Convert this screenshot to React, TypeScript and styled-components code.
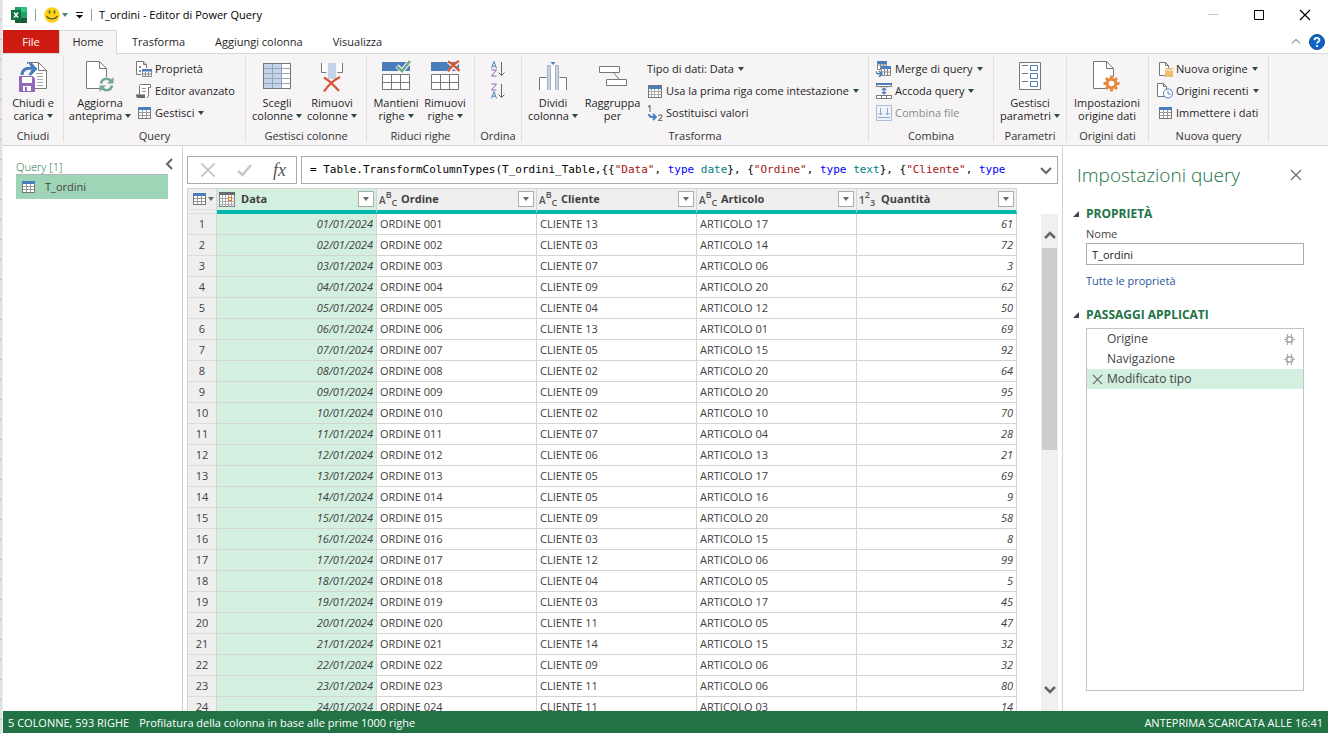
import React from "react";
import styled, { createGlobalStyle, css } from "styled-components";

const GlobalStyle = createGlobalStyle`
  *, *::before, *::after { box-sizing: border-box; }
  html, body { margin: 0; padding: 0; }
  body {
    font-family: "Open Sans", "Noto Sans", sans-serif;
    font-size: 11px;
    line-height: 14px;
    color: #262626;
    background: #fff;
  }
  button, input { font: inherit; color: inherit; }
  button { margin: 0; padding: 0; border: 0; background: none; }
  svg { display: block; flex: none; }
`;

/* ---------- frame ---------- */

const Desktop = styled.div`
  display: flex;
  height: 100vh;
  min-height: 480px;
  overflow: hidden;
`;

const SheetEdge = styled.div`
  flex: none;
  width: 3px;
  border-right: 1px solid #f0f0f0;
  background: repeating-linear-gradient(to bottom, #e2e2e2 0, #e2e2e2 19px, #bdbdbd 19px, #bdbdbd 20px);
`;

const AppWindow = styled.div`
  display: flex;
  flex: 1;
  flex-direction: column;
  min-width: 0;
  padding-bottom: 1px;
`;

/* ---------- title bar ---------- */

const TitleBar = styled.header`
  display: flex;
  flex: none;
  align-items: center;
  height: 30px;
  padding-left: 8px;
`;

const QuickAccess = styled.div`
  display: flex;
  align-items: center;
  gap: 8px;
  margin-right: 7px;
`;

const Rule = styled.span`
  width: 1px;
  height: 12px;
  background: #8aa09a;
`;

const QuickButton = styled.button`
  display: flex;
  align-items: center;
  gap: 2px;
`;

const WindowTitle = styled.h1`
  flex: 1;
  margin: 0;
  font-size: 11px;
  font-weight: 400;
  line-height: 16px;
  color: #000;
`;

const WindowButton = styled.button`
  display: flex;
  align-items: center;
  justify-content: center;
  width: 46px;
  height: 28px;
`;

/* ---------- ribbon ---------- */

const TabRow = styled.nav`
  display: flex;
  flex: none;
  align-items: stretch;
  height: 24px;
  border-bottom: 1px solid #d9d7d8;
`;

const Tab = styled.button<{ $kind?: "file" | "active" }>`
  padding: 0 15px;
  height: 23px;
  color: #262626;
  ${(p) =>
    p.$kind === "file" &&
    css`
      width: 56px;
      color: #fff;
      background: #d01b12;
    `}
  ${(p) =>
    p.$kind === "active" &&
    css`
      width: 58px;
      height: 24px;
      padding: 0 0 2px;
      background: #f6f4f5;
      border: 1px solid #d9d7d8;
      border-bottom: 0;
    `}
`;

const TabTools = styled.div`
  display: flex;
  align-items: center;
  gap: 8px;
  margin-left: auto;
  padding-right: 3px;
`;

const RibbonBar = styled.div`
  display: flex;
  flex: none;
  height: 92px;
  padding: 2px 0 3px;
  background: #f6f4f5;
  border-bottom: 1px solid #d4d2d3;
`;

const GroupBox = styled.section<{ $width: number }>`
  display: flex;
  flex: none;
  flex-direction: column;
  width: ${(p) => p.$width}px;
  border-right: 1px solid #e1dfe0;
`;

const GroupBody = styled.div<{ $pad: number }>`
  display: flex;
  flex: 1;
  align-items: flex-start;
  padding: 4px 0 0 ${(p) => p.$pad}px;
`;

const GroupLabel = styled.h2`
  margin: 0;
  font-size: 11px;
  font-weight: 400;
  line-height: 13px;
  text-align: center;
  color: #333;
`;

const BigButtonBox = styled.button<{ $width: number }>`
  display: flex;
  flex: none;
  flex-direction: column;
  align-items: center;
  width: ${(p) => p.$width}px;
  line-height: 13px;
  white-space: nowrap;
  color: #1f1f1f;
`;

const BigLine = styled.span`
  display: flex;
  align-items: center;
  gap: 3px;
  &:nth-of-type(1) { margin-top: 4px; }
`;

const Stack = styled.div`
  display: flex;
  flex-direction: column;
  margin-top: -2px;
  padding-left: 2px;
`;

const SmallButton = styled.button`
  display: flex;
  align-items: center;
  gap: 4px;
  height: 22px;
  white-space: nowrap;
  color: #1f1f1f;
  &:disabled { color: #8b8b8b; }
`;

const IconSlot = styled.span`
  display: flex;
  justify-content: center;
  width: 16px;
  margin-right: -1px;
`;

/* ---------- work area ---------- */

const WorkArea = styled.div`
  display: flex;
  flex: 1;
  min-height: 0;
`;

const QueryPane = styled.aside`
  flex: none;
  width: 180px;
  padding: 12px 14px 0 13px;
  border-right: 1px solid #d0d0d0;
`;

const QueryHead = styled.div`
  display: flex;
  align-items: flex-start;
  justify-content: space-between;
  height: 16px;
  margin-right: -7px;
`;

const QueryTitle = styled.h2`
  margin: 0;
  padding-top: 1px;
  font-size: 11px;
  font-weight: 300;
  line-height: 16px;
  color: #217346;
`;

const QueryItem = styled.button`
  display: flex;
  align-items: center;
  gap: 10px;
  width: 100%;
  height: 25px;
  padding-left: 6px;
  border-top: 1px solid #b3b3b3;
  background: #9fd5b7;
  color: #444;
`;

const Center = styled.main`
  display: flex;
  flex: 1;
  flex-direction: column;
  min-width: 0;
  padding: 10px 4px 0;
`;

const FormulaRow = styled.div`
  display: flex;
  flex: none;
  gap: 4px;
  height: 28px;
`;

const FormulaTools = styled.div`
  display: flex;
  flex: none;
  align-items: center;
  justify-content: space-between;
  width: 110px;
  padding: 0 10px 0 12px;
  border: 1px solid #ababab;
`;

const FxButton = styled.button`
  font-family: "Liberation Serif", serif;
  font-size: 18px;
  font-style: italic;
  line-height: 20px;
  color: #555;
`;

const FormulaBox = styled.div`
  display: flex;
  flex: 1;
  align-items: center;
  justify-content: space-between;
  min-width: 0;
  padding: 0 5px 0 8px;
  border: 1px solid #ababab;
`;

const Formula = styled.code`
  overflow: hidden;
  font-family: "DejaVu Sans Mono", "Liberation Mono", monospace;
  font-size: 11px;
  white-space: pre;
  color: #000;
`;

const Str = styled.span`
  color: #a31515;
`;
const Kw = styled.span`
  color: #0000ff;
`;
const Ty = styled.span`
  color: #008080;
`;

const GridArea = styled.div`
  display: flex;
  flex: 1;
  justify-content: space-between;
  min-height: 0;
  margin-top: 4px;
  overflow: hidden;
`;

const DataTable = styled.table`
  flex: none;
  align-self: flex-start;
  width: 830px;
  table-layout: fixed;
  border-collapse: separate;
  border-spacing: 0;
  border-left: 1px solid #d4d4d4;
  color: #404040;
`;

const HeadCell = styled.th<{ $active?: boolean; $plain?: boolean }>`
  height: 26px;
  padding: 0;
  border-top: 1px solid #d4d4d4;
  border-right: 1px solid #d4d4d4;
  border-bottom: ${(p) => (p.$plain ? "1px solid #e0e0e0" : "4px solid #01b8aa")};
  background: ${(p) => (p.$active ? "#d2efdf" : "#efefef")};
  font-weight: 700;
  text-align: left;
`;

const HeadInner = styled.div`
  display: flex;
  align-items: center;
  gap: 6px;
  height: 21px;
  padding: 0 2px 1px;
`;

const CornerInner = styled(HeadInner)`
  gap: 2px;
  margin-bottom: 3px;
  padding: 0 0 0 5px;
  border-bottom: 1px solid #e0e0e0;
`;

const FilterButton = styled.button`
  display: flex;
  align-items: center;
  justify-content: center;
  width: 16px;
  height: 16px;
  margin-left: auto;
  border: 1px solid #ababab;
  background: #fff;
`;

const RowHead = styled.th`
  height: 21px;
  padding: 0;
  border-right: 1px solid #d4d4d4;
  border-bottom: 1px solid #dcdcdc;
  background: #efefef;
  font-weight: 400;
  text-align: center;
`;

const Cell = styled.td<{ $active?: boolean; $numeric?: boolean }>`
  height: 21px;
  padding: 0 3px;
  border-right: 1px solid #d4d4d4;
  border-bottom: 1px solid #d4d4d4;
  white-space: nowrap;
  ${(p) =>
    p.$numeric &&
    css`
      text-align: right;
      font-style: italic;
    `}
  ${(p) =>
    p.$active &&
    css`
      background: #d2efdf;
    `}
`;

const ScrollTrack = styled.div`
  display: flex;
  flex: none;
  flex-direction: column;
  width: 17px;
  margin-top: 26px;
  background: #f0f0f0;
`;

const ScrollButton = styled.button`
  display: flex;
  flex: none;
  align-items: center;
  justify-content: center;
  height: 34px;
  padding-top: 10px;
`;

const ScrollThumb = styled.div`
  flex: 0 0 202px;
  margin: 0 1px;
  background: #cdcdcd;
`;

const ScrollDown = styled(ScrollButton)`
  margin-top: auto;
  padding: 0 0 10px;
`;

/* ---------- settings pane ---------- */

const SettingsPane = styled.aside`
  display: flex;
  flex: none;
  flex-direction: column;
  width: 266px;
  padding: 15px 24px 20px 23px;
  border-left: 1px solid #d0d0d0;
`;

const PaneHead = styled.div`
  display: flex;
  align-items: center;
  justify-content: space-between;
  height: 28px;
  margin-left: -9px;
  padding-right: 2px;
`;

const PaneTitle = styled.h2`
  margin: 0;
  font-size: 19px;
  font-weight: 300;
  line-height: 28px;
  color: #217346;
`;

const SectionTitle = styled.h3`
  display: flex;
  align-items: center;
  gap: 7px;
  margin: 0 0 0 -13px;
  font-size: 12px;
  font-weight: 700;
  line-height: 16px;
  color: #217346;
`;

const Properties = styled.section`
  padding-top: 17px;
  color: #444;
`;

const NameLabel = styled.label`
  display: block;
  margin-top: 4px;
  line-height: 16px;
`;

const NameInput = styled.input`
  width: 100%;
  height: 22px;
  margin: 1px 0 0;
  padding: 0 5px;
  border: 1px solid #ababab;
  outline: 0;
  background: #fff;
  color: #222;
`;

const MoreLink = styled.a`
  display: block;
  margin-top: 8px;
  line-height: 16px;
  color: #2b579a;
  text-decoration: none;
`;

const Steps = styled.section`
  display: flex;
  flex: 1;
  flex-direction: column;
  padding-top: 18px;
`;

const StepList = styled.ul`
  flex: 1;
  margin: 5px 0 0;
  padding: 0;
  border: 1px solid #c3c3c3;
  list-style: none;
`;

const StepItem = styled.li<{ $selected?: boolean }>`
  display: flex;
  align-items: center;
  gap: 4px;
  height: 20px;
  padding: 0 8px 0 5px;
  font-size: 12px;
  color: #444;
  background: ${(p) => (p.$selected ? "#d2efdf" : "transparent")};
`;

const StepMark = styled.span`
  display: flex;
  width: 11px;
`;

const StepName = styled.span`
  flex: 1;
`;

/* ---------- status bar ---------- */

const StatusBar = styled.footer`
  display: flex;
  flex: none;
  align-items: center;
  gap: 10px;
  height: 22px;
  padding: 2px 5px 0;
  background: #217346;
  color: #fff;
`;

const StatusRight = styled.span`
  margin-left: auto;
`;

/* ---------- icons ---------- */

const G = "#777777";
const B = "#4a7ebb";

const Caret = ({ color = "#2d4a42" }: { color?: string }) => (
  <svg width="6" height="4" viewBox="0 0 6 4">
    <path d="M0 0h6L3 4z" fill={color} />
  </svg>
);

const ExcelIcon = () => (
  <svg width="16" height="16" viewBox="0 0 16 16">
    <path d="M4 0h6v5H4z" fill="#21a366" />
    <path d="M10 0h6v5h-6z" fill="#33c481" />
    <path d="M4 5h6v6H4z" fill="#107c41" />
    <path d="M10 5h6v6h-6z" fill="#21a366" />
    <path d="M4 11h12v5H4z" fill="#185c37" />
    <path d="M0 3h10v10H0z" fill="#0f7240" />
    <path d="M3 5.500l4 5M7 5.500l-4 5" stroke="#fff" strokeWidth="1.500" />
  </svg>
);

const SmileIcon = () => (
  <svg width="16" height="16" viewBox="0 0 16 16">
    <circle cx="8" cy="8" r="7.800" fill="#fcd116" />
    <path d="M5.500 3.500v3M10.500 3.500v3" stroke="#4b5b3c" strokeWidth="1.600" />
    <path d="M3 9c1.200 3.800 8.800 3.800 10 0" fill="none" stroke="#5a5a3c" strokeWidth="1.300" />
  </svg>
);

const CloseLoadIcon = () => (
  <svg width="28" height="32" viewBox="0 0 28 32" fill="none">
    <path d="M8.500 4V2.500h11l8 8v18H16" fill="#fff" stroke={G} />
    <path d="M19.500 2.500v8h8" stroke={G} />
    <path d="M17 13.500h7M18 16.500h6M18 19.500h6M18 22.500h6M18 25.500h6" stroke="#a6a6a6" />
    <path d="M3 15C3 10 7 7.500 13 8.500" stroke={B} strokeWidth="3" />
    <path d="M10 3l2-.5L18 9l-6 6-2-.5L13.500 9z" fill={B} stroke={B} />
    <path d="M0 16h13.500l2.500 2.500V32H0z" fill="#9467bd" />
    <path d="M3 17h10v6H3zM4 26h8v5H4z" fill="#fff" />
    <path d="M6 27h2v4H6z" fill="#9467bd" />
  </svg>
);

const PageOutline = () => (
  <>
    <path d="M.5 1.500h13l7 7v20H.5z" fill="#fff" stroke={G} />
    <path d="M13.500 1.500v7h7" stroke={G} />
  </>
);

const RefreshIcon = () => (
  <svg width="28" height="32" viewBox="0 0 28 32" fill="none">
    <PageOutline />
    <circle cx="20.500" cy="24.500" r="7.500" fill="#f6f4f5" />
    <path d="M15 23.500c.5-4 5.500-6.500 9.500-3M26 25.500c-.5 4-5.500 6.500-9.500 3" stroke="#74a892" strokeWidth="2.400" />
    <path d="M27.500 17v6.500H21zM13.500 32v-6.500H20z" fill="#74a892" />
  </svg>
);

const ChooseColsIcon = () => (
  <svg width="28" height="32" viewBox="0 0 28 32" fill="none" shapeRendering="crispEdges">
    <path d="M.5 3.500h27v25H.5z" fill="#fff" />
    <path d="M1 4h18v24H1z" fill="#c1d4ea" />
    <path d="M9.500 4v25M18.500 4v25M1 8.500h26M1 13.500h26M1 18.500h26M1 23.500h26" stroke="#9aa5b1" />
    <path d="M.5 3.500h27v25H.5z" stroke={G} />
  </svg>
);

const RemoveColsIcon = () => (
  <svg width="24" height="32" viewBox="0 0 24 32" fill="none">
    <path d="M1.500 3v9.500h5V3M17.500 3v9.500h5V3" fill="#fff" />
    <path d="M1.500 3v9.500h5M22.500 3v9.500h-5" stroke={G} />
    <path d="M8 3h8v16H8z" fill="#c1d4ea" />
    <path d="M4 17.500c5 3 11 9 15 13.500M20 17C14 20 8 25.500 4 31.500" stroke="#d8552f" strokeWidth="2.200" />
  </svg>
);

const RowsIcon = ({ remove }: { remove?: boolean }) => (
  <svg width="30" height="32" viewBox="0 0 30 32" fill="none">
    <path d="M1 2h28v9H1z" fill={B} />
    <path d="M1.500 14.500h27v15h-27z" fill="#fff" stroke={G} />
    <path d="M10.500 15v15M19.500 15v15M2 22.500h27" stroke={G} />
    {remove ? (
      <>
        <path d="M18 1.500l11 10M29.500 1L18 12" stroke="#f6f4f5" strokeWidth="3.500" />
        <path d="M18 1.500c4 2 8 6 11.500 9.500M29 1c-4 2-8 6-11 10.500" stroke="#d8552f" strokeWidth="2.200" />
      </>
    ) : (
      <>
        <path d="M16 6l5 5L30 0" stroke="#fff" strokeWidth="4.500" />
        <path d="M16 6.500l5 4.500L29 1" stroke="#74a892" strokeWidth="2.800" />
      </>
    )}
  </svg>
);

const SortIcon = ({ desc }: { desc?: boolean }) => (
  <svg width="16" height="17" viewBox="0 0 16 17" fill="none">
    <path d="M-2.500 3.500L0-3.500 2.500 3.500M-1.500 1.200h3" stroke={B} transform={`translate(4 ${desc ? 12 : 4})`} />
    <path d="M-2.500-3h5l-5 6h5" stroke="#8e62b8" transform={`translate(4 ${desc ? 4 : 12})`} />
    <path d="M11.500 1v13M8.500 11.500l3 3 3-3" stroke="#666" />
  </svg>
);

const SplitIcon = () => (
  <svg width="28" height="32" viewBox="0 0 28 32" fill="none">
    <path d="M.5 30V17.500h7V30M27.500 30V17.500h-7V30" fill="#fff" />
    <path d="M.5 30V17.500h7M27.500 30V17.500h-7" stroke={G} />
    <path d="M8 6h4v24H8zM16 6h4v24h-4z" fill="#c1d4ea" />
    <path d="M12 6h4v24h-4z" fill="#fff" />
    <path d="M8.500 30V5.500h3V30M16.500 30V5.500h3V30" stroke="#a9b3bd" />
    <path d="M11.500 2h5L14 5z" fill={B} />
  </svg>
);

const GroupByIcon = () => (
  <svg width="28" height="32" viewBox="0 0 28 32" fill="none">
    <path d="M14 12l6 7" stroke={G} />
    <path d="M.5 6.500h20v6H.5zM7.500 19.500h20v6h-20z" fill="#fff" stroke={G} />
  </svg>
);

const ParamsIcon = () => (
  <svg width="24" height="32" viewBox="0 0 24 32" fill="none">
    <path d="M1.500 2.500h21v27h-21z" fill="#fff" stroke={G} />
    <path d="M4 5.500h6M4 13.500h6M4 21.500h6" stroke={G} />
    <path d="M12.500 5.500h7v5h-7zM12.500 13.500h7v5h-7zM12.500 21.500h7v5h-7z" stroke={B} />
  </svg>
);

const SourceSettingsIcon = () => (
  <svg width="28" height="32" viewBox="0 0 28 32" fill="none">
    <PageOutline />
    <circle cx="18.500" cy="23.500" r="7" fill="#f6f4f5" />
    <circle cx="18.500" cy="23.500" r="4.300" fill="#fff" stroke="#e58a3c" strokeWidth="3" />
    <path
      d="M18.500 15.500v3M18.500 28.500v3M10.500 23.500h3M23.500 23.500h3M13 18l2 2M22 27l2 2M24 18l-2 2M15 27l-2 2"
      stroke="#e58a3c"
      strokeWidth="3"
    />
  </svg>
);

const TableIcon = () => (
  <svg width="13" height="12" viewBox="0 0 13 12" fill="none" shapeRendering="crispEdges">
    <path d="M0 0h13v12H0z" fill="#fff" />
    <path d="M4.500 3v9M8.500 3v9M0 5.500h13M0 8.500h13" stroke="#999" />
    <path d="M.5 3v8.500h12V3" stroke="#777" />
    <path d="M0 0h13v3H0z" fill={B} />
  </svg>
);

const PropertiesIcon = () => (
  <svg width="16" height="16" viewBox="0 0 16 16" fill="none">
    <path d="M.5 13.500V.5h7l3 3V7M.5 13.500H5" fill="#fff" stroke={G} />
    <path d="M7.500.5v3h3" stroke={G} />
    <path d="M3 5h2v2H3zM3 9h2v2H3z" fill="#888" />
    <path d="M6 8h10v8H6z" fill="#fff" />
    <path d="M6.500 10v5.500h9V10M9.500 11v4M12.500 11v4M6 13h10" stroke="#888" />
    <path d="M6 8h10v2.500H6z" fill={B} />
  </svg>
);

const ScriptIcon = () => (
  <svg width="16" height="14" viewBox="0 0 16 14" fill="none">
    <path d="M3.500 11V1.500c0-1 1-1 1.500-1h9.500v3h-2V11c0 2-1 2.500-2 2.500" fill="#fff" stroke={G} />
    <path d="M6 4.500h4M6 7.500h4" stroke="#999" />
    <path d="M0 10.500h9V14H2c-1.500 0-2-2-2-3.500z" fill="#666" />
  </svg>
);

const HeaderRowIcon = () => (
  <svg width="14" height="13" viewBox="0 0 14 13" fill="none" shapeRendering="crispEdges">
    <path d="M.5.500h13v12H.5z" fill="#fff" />
    <path d="M1 1h12v3H1z" fill={B} />
    <path d="M3.500 4v9M6.500 4v9M10.500 4v9M1 6.500h12M1 9.500h12" stroke="#aaa" />
    <path d="M.5.500h13v12H.5z" stroke={G} />
  </svg>
);

const ReplaceIcon = () => (
  <svg width="16" height="16" viewBox="0 0 16 16" fill="none">
    <path d="M1 2l2-1.500V7M11.500 11c.5-1.800 3.500-1.500 3.500.2 0 1.300-2 2.300-3.500 4.300H15.500" stroke="#777" strokeWidth="1.200" />
    <path d="M2 9c0 2 1 3 3 3h3M6 9l3 3-3 3" stroke={B} strokeWidth="1.800" />
  </svg>
);

const MergeIcon = () => (
  <svg width="16" height="16" viewBox="0 0 16 16" fill="none">
    <path d="M1.500.5h9v8h-9zM1 4h10M4.500 2v7M7.500 2v7" fill="#fff" stroke="#888" />
    <path d="M1 0h10v3H1z" fill={B} />
    <path d="M5.500 6.500h9v8h-9zM5 11h10M8.500 8v7M11.500 8v7" fill="#fff" stroke="#888" />
    <path d="M5 5h10v3H5z" fill={B} />
    <path d="M0 10c0 2.500 1 3 5 3M3 10l3 3-3 3" stroke={B} strokeWidth="1.500" />
  </svg>
);

const AppendIcon = () => (
  <svg width="16" height="16" viewBox="0 0 16 16" fill="none">
    <path d="M.5.500h15v3H.5zM.5 12.500h15v3H.5zM5.500 12v3M10.500 12v3M5.500 3v1.500M10.500 3v1.500" fill="#fff" stroke="#777" />
    <path d="M0 0h16v2H0z" fill={B} />
    <path d="M8 5v6M6 7l2-2 2 2M6 9l2 2 2-2" stroke={B} strokeWidth="1.200" />
  </svg>
);

const CombineIcon = () => (
  <svg width="16" height="16" viewBox="0 0 16 16" fill="none">
    <path d="M.5.500h15v15H.5z" fill="#f0f4fa" stroke="#a9bbd6" />
    <path d="M4.500 3v7M2.500 8l2 2 2-2M11.500 3v7M9.500 8l2 2 2-2M2 12.500h12" stroke="#8ea6c8" />
  </svg>
);

const NewSourceIcon = () => (
  <svg width="15" height="15" viewBox="0 0 15 15" fill="none">
    <path d="M1.500.500h6l3 3v10h-9z" fill="#fff" stroke={G} />
    <path d="M7.500.500v3h3" stroke={G} />
    <path d="M7 6h8v9H7z" fill="#eebf72" />
    <path d="M7 7.500c2 1 6 1 8 0" stroke="#fff" strokeWidth=".8" />
  </svg>
);

const RecentIcon = () => (
  <svg width="16" height="16" viewBox="0 0 16 16" fill="none">
    <path d="M.5.500h6l3 3v10h-9z" fill="#fff" stroke={G} />
    <path d="M6.500.500v3h3" stroke={G} />
    <circle cx="11" cy="10.500" r="4.500" fill="#fff" stroke={B} />
    <path d="M11 8v3h2.500" stroke={B} />
  </svg>
);

const CalendarIcon = () => (
  <svg width="16" height="15" viewBox="0 0 16 15" fill="none" shapeRendering="crispEdges">
    <path d="M.5.500h15v14H.5z" fill="#fff" stroke="#777" />
    <path d="M3.500 3v12M6.500 3v12M9.500 3v12M12.500 3v12M0 6.500h16M0 9.500h16M0 12.500h16" stroke="#aaa" />
    <path d="M0 0h16v3H0z" fill="#6b6b6b" />
    <path d="M9.500 5.500h3v3h-3z" fill="#fff" stroke="#e07a1f" />
  </svg>
);

const TypeGlyph = styled.span`
  display: flex;
  align-items: flex-start;
  width: 16px;
  height: 18px;
  font-size: 10px;
  font-weight: 600;
  line-height: 12px;
  color: #555;
`;

const Middle = styled.span`
  padding-top: 4px;
`;

const Raised = styled.span`
  font-size: 9px;
  line-height: 10px;
`;

const Lowered = styled.span`
  padding-top: 7px;
  font-size: 9px;
  line-height: 12px;
`;

const XMark = ({ size, color, weight = 1 }: { size: number; color: string; weight?: number }) => (
  <svg width={size} height={size} viewBox="0 0 12 12">
    <path d="M1 1l10 10M11 1L1 11" stroke={color} strokeWidth={weight} />
  </svg>
);

const Chevron = ({ dir, color = "#666", w = 10, weight = 2 }: { dir: "up" | "down" | "left"; color?: string; w?: number; weight?: number }) => {
  const d = { up: "M1 8l5-5 5 5", down: "M1 4l5 5 5-5", left: "M9 1L4 6l5 5" }[dir];
  return (
    <svg width={w} height={w} viewBox="0 0 12 12" fill="none">
      <path d={d} stroke={color} strokeWidth={weight} />
    </svg>
  );
};

const GearIcon = () => (
  <svg width="11" height="11" viewBox="0 0 11 11" fill="none">
    <circle cx="5.500" cy="5.500" r="2.700" stroke="#aaaaaa" strokeWidth="1.600" />
    <path d="M3.500 0v3M7.500 0v3M3.500 8v3M7.500 8v3M0 5.500h2.500M8.500 5.500H11M1.500 3.500H4M7 3.500h2.500M1.500 7.500H4M7 7.500h2.500" stroke="#aaaaaa" strokeWidth="1.200" />
  </svg>
);

const Triangle = () => (
  <svg width="6" height="6" viewBox="0 0 6 6">
    <path d="M6 0v6H0z" fill="#444" />
  </svg>
);

/* ---------- ribbon parts ---------- */

interface BigProps {
  icon: React.ReactNode;
  lines: [string, string];
  width: number;
  menu?: boolean;
}

const BigButton = ({ icon, lines, width, menu }: BigProps) => (
  <BigButtonBox type="button" $width={width}>
    {icon}
    <BigLine>{lines[0]}</BigLine>
    <BigLine>
      {lines[1]}
      {menu && <Caret />}
    </BigLine>
  </BigButtonBox>
);

interface SmallProps {
  icon?: React.ReactNode;
  label: string;
  menu?: boolean;
  disabled?: boolean;
}

const Small = ({ icon, label, menu, disabled }: SmallProps) => (
  <SmallButton type="button" disabled={disabled}>
    {icon && <IconSlot>{icon}</IconSlot>}
    {label}
    {menu && <Caret />}
  </SmallButton>
);

const Group = ({ label, width, pad = 0, children }: { label: string; width: number; pad?: number; children: React.ReactNode }) => (
  <GroupBox $width={width}>
    <GroupBody $pad={pad}>{children}</GroupBody>
    <GroupLabel>{label}</GroupLabel>
  </GroupBox>
);

const Ribbon = () => (
  <RibbonBar>
    <Group label="Chiudi" width={61}>
      <BigButton icon={<CloseLoadIcon />} lines={["Chiudi e", "carica"]} width={60} menu />
    </Group>
    <Group label="Query" width={182} pad={2}>
      <BigButton icon={<RefreshIcon />} lines={["Aggiorna", "anteprima"]} width={68} menu />
      <Stack>
        <Small icon={<PropertiesIcon />} label="Proprietà" />
        <Small icon={<ScriptIcon />} label="Editor avanzato" />
        <Small icon={<TableIcon />} label="Gestisci" menu />
      </Stack>
    </Group>
    <Group label="Gestisci colonne" width={121} pad={4}>
      <BigButton icon={<ChooseColsIcon />} lines={["Scegli", "colonne"]} width={54} menu />
      <BigButton icon={<RemoveColsIcon />} lines={["Rimuovi", "colonne"]} width={56} menu />
    </Group>
    <Group label="Riduci righe" width={108} pad={4}>
      <BigButton icon={<RowsIcon />} lines={["Mantieni", "righe"]} width={50} menu />
      <BigButton icon={<RowsIcon remove />} lines={["Rimuovi", "righe"]} width={48} menu />
    </Group>
    <Group label="Ordina" width={47} pad={13}>
      <Stack>
        <SmallButton type="button" aria-label="Ordinamento crescente"><SortIcon /></SmallButton>
        <SmallButton type="button" aria-label="Ordinamento decrescente"><SortIcon desc /></SmallButton>
      </Stack>
    </Group>
    <Group label="Trasforma" width={347} pad={4}>
      <BigButton icon={<SplitIcon />} lines={["Dividi", "colonna"]} width={54} menu />
      <BigButton icon={<GroupByIcon />} lines={["Raggruppa", "per"]} width={65} />
      <Stack>
        <Small label="Tipo di dati: Data" menu />
        <Small icon={<HeaderRowIcon />} label="Usa la prima riga come intestazione" menu />
        <Small icon={<ReplaceIcon />} label="Sostituisci valori" />
      </Stack>
    </Group>
    <Group label="Combina" width={125} pad={5}>
      <Stack>
        <Small icon={<MergeIcon />} label="Merge di query" menu />
        <Small icon={<AppendIcon />} label="Accoda query" menu />
        <Small icon={<CombineIcon />} label="Combina file" disabled />
      </Stack>
    </Group>
    <Group label="Parametri" width={73}>
      <BigButton icon={<ParamsIcon />} lines={["Gestisci", "parametri"]} width={72} menu />
    </Group>
    <Group label="Origini dati" width={82}>
      <BigButton icon={<SourceSettingsIcon />} lines={["Impostazioni", "origine dati"]} width={80} />
    </Group>
    <Group label="Nuova query" width={120} pad={6}>
      <Stack>
        <Small icon={<NewSourceIcon />} label="Nuova origine" menu />
        <Small icon={<RecentIcon />} label="Origini recenti" menu />
        <Small icon={<TableIcon />} label="Immettere i dati" />
      </Stack>
    </Group>
  </RibbonBar>
);

/* ---------- data preview ---------- */

const rows: [number, number, number][] = [
  [13, 17, 61], [3, 14, 72], [7, 6, 3], [9, 20, 62], [4, 12, 50], [13, 1, 69],
  [5, 15, 92], [2, 20, 64], [9, 20, 95], [2, 10, 70], [7, 4, 28], [6, 13, 21],
  [5, 17, 69], [5, 16, 9], [9, 20, 58], [3, 15, 8], [12, 6, 99], [4, 5, 5],
  [3, 17, 45], [11, 5, 47], [14, 15, 32], [9, 6, 32], [11, 6, 80], [11, 3, 14],
];

const pad = (n: number, size: number) => String(n).padStart(size, "0");

const TypeMark = ({ text }: { text: string }) => (
  <TypeGlyph>
    <Middle>{text[0]}</Middle>
    <Raised>{text[1]}</Raised>
    <Lowered>{text[2]}</Lowered>
  </TypeGlyph>
);

const columns = [
  { name: "Data", icon: <CalendarIcon />, active: true },
  { name: "Ordine", icon: <TypeMark text="ABC" /> },
  { name: "Cliente", icon: <TypeMark text="ABC" /> },
  { name: "Articolo", icon: <TypeMark text="ABC" /> },
  { name: "Quantità", icon: <TypeMark text="123" /> },
];

const PreviewTable = () => (
  <DataTable>
    <colgroup>
      <col width="29" />
      {columns.map((c) => <col key={c.name} width="160" />)}
    </colgroup>
    <thead>
      <tr>
        <HeadCell $plain>
          <CornerInner><TableIcon /><Caret color="#666" /></CornerInner>
        </HeadCell>
        {columns.map((c) => (
          <HeadCell key={c.name} $active={c.active} scope="col">
            <HeadInner>
              {c.icon}
              {c.name}
              <FilterButton type="button" aria-label={`Filtra ${c.name}`}><Caret color="#666" /></FilterButton>
            </HeadInner>
          </HeadCell>
        ))}
      </tr>
    </thead>
    <tbody>
      {rows.map(([client, article, qty], i) => (
        <tr key={i}>
          <RowHead scope="row">{i + 1}</RowHead>
          <Cell $active $numeric>{pad(i + 1, 2)}/01/2024</Cell>
          <Cell>ORDINE {pad(i + 1, 3)}</Cell>
          <Cell>CLIENTE {pad(client, 2)}</Cell>
          <Cell>ARTICOLO {pad(article, 2)}</Cell>
          <Cell $numeric>{qty}</Cell>
        </tr>
      ))}
    </tbody>
  </DataTable>
);

export default function App() {
  return (
    <Desktop>
      <GlobalStyle />
      <SheetEdge />
      <AppWindow>
        <TitleBar>
          <QuickAccess>
            <ExcelIcon />
            <Rule />
            <QuickButton type="button" aria-label="Invia feedback">
              <SmileIcon /><Caret color="#5b7f74" />
            </QuickButton>
            <QuickButton type="button" aria-label="Personalizza barra di accesso rapido">
              <svg width="7" height="7" viewBox="0 0 7 7">
                <path d="M0 0h7v1H0zM0 3h7L3.500 6.500z" fill="#111" />
              </svg>
            </QuickButton>
            <Rule />
          </QuickAccess>
          <WindowTitle>T_ordini - Editor di Power Query</WindowTitle>
          <WindowButton type="button" aria-label="Riduci a icona">
            <svg width="10" height="10" viewBox="0 0 10 10"><path d="M0 4h10v1H0z" fill="#c4c4c4" /></svg>
          </WindowButton>
          <WindowButton type="button" aria-label="Ingrandisci">
            <svg width="10" height="10" viewBox="0 0 10 10"><path d="M.5.500h9v9h-9z" fill="none" stroke="#000" /></svg>
          </WindowButton>
          <WindowButton type="button" aria-label="Chiudi finestra"><XMark size={12} color="#000" weight={1.2} /></WindowButton>
        </TitleBar>

        <TabRow>
          <Tab type="button" $kind="file">File</Tab>
          <Tab type="button" $kind="active">Home</Tab>
          <Tab type="button">Trasforma</Tab>
          <Tab type="button">Aggiungi colonna</Tab>
          <Tab type="button">Visualizza</Tab>
          <TabTools>
            <button type="button" aria-label="Comprimi barra multifunzione"><Chevron dir="up" color="#a0a0a0" weight={1.5} /></button>
            <button type="button" aria-label="Guida">
              <svg width="16" height="16" viewBox="0 0 16 16" fill="none">
                <circle cx="8" cy="8" r="7.500" fill="#0a64c8" stroke="#1c4f8c" />
                <path d="M5.500 6.200C5.500 3.200 10.500 3.200 10.500 6c0 1.700-2.500 1.700-2.500 3.500M8 11v2" stroke="#fff" strokeWidth="1.800" />
              </svg>
            </button>
          </TabTools>
        </TabRow>

        <Ribbon />

        <WorkArea>
          <QueryPane>
            <QueryHead>
              <QueryTitle>Query [1]</QueryTitle>
              <button type="button" aria-label="Comprimi riquadro"><Chevron dir="left" w={12} /></button>
            </QueryHead>
            <QueryItem type="button"><TableIcon />T_ordini</QueryItem>
          </QueryPane>

          <Center>
            <FormulaRow>
              <FormulaTools>
                <button type="button" aria-label="Annulla"><XMark size={16} color="#c6c6c6" weight={1.5} /></button>
                <button type="button" aria-label="Conferma">
                  <svg width="15" height="13" viewBox="0 0 15 13"><path d="M1 7l4.500 4L14 1" fill="none" stroke="#c6c6c6" strokeWidth="2.500" /></svg>
                </button>
                <FxButton type="button" aria-label="Aggiungi passaggio">fx</FxButton>
              </FormulaTools>
              <FormulaBox>
                <Formula role="textbox" aria-label="Barra della formula">
                  {"= Table.TransformColumnTypes(T_ordini_Table,{{"}<Str>"Data"</Str>, <Kw>type</Kw> <Ty>date</Ty>{"}, {"}
                  <Str>"Ordine"</Str>, <Kw>type</Kw> <Ty>text</Ty>{"}, {"}<Str>"Cliente"</Str>, <Kw>type</Kw>
                </Formula>
                <button type="button" aria-label="Espandi barra della formula"><Chevron dir="down" w={12} /></button>
              </FormulaBox>
            </FormulaRow>
            <GridArea>
              <PreviewTable />
              <ScrollTrack>
                <ScrollButton type="button" aria-label="Scorri in alto"><Chevron dir="up" w={12} weight={2.5} /></ScrollButton>
                <ScrollThumb />
                <ScrollDown type="button" aria-label="Scorri in basso"><Chevron dir="down" w={12} weight={2.5} /></ScrollDown>
              </ScrollTrack>
            </GridArea>
          </Center>

          <SettingsPane>
            <PaneHead>
              <PaneTitle>Impostazioni query</PaneTitle>
              <button type="button" aria-label="Chiudi riquadro"><XMark size={12} color="#666" weight={1.1} /></button>
            </PaneHead>
            <Properties>
              <SectionTitle><Triangle />PROPRIETÀ</SectionTitle>
              <NameLabel htmlFor="query-name">Nome</NameLabel>
              <NameInput id="query-name" type="text" defaultValue="T_ordini" />
              <MoreLink href="#proprieta">Tutte le proprietà</MoreLink>
            </Properties>
            <Steps>
              <SectionTitle><Triangle />PASSAGGI APPLICATI</SectionTitle>
              <StepList>
                <StepItem><StepMark /><StepName>Origine</StepName><GearIcon /></StepItem>
                <StepItem><StepMark /><StepName>Navigazione</StepName><GearIcon /></StepItem>
                <StepItem $selected><StepMark><XMark size={11} color="#666" weight={1.3} /></StepMark><StepName>Modificato tipo</StepName></StepItem>
              </StepList>
            </Steps>
          </SettingsPane>
        </WorkArea>

        <StatusBar>
          <span>5 COLONNE, 593 RIGHE</span>
          <span>Profilatura della colonna in base alle prime 1000 righe</span>
          <StatusRight>ANTEPRIMA SCARICATA ALLE 16:41</StatusRight>
        </StatusBar>
      </AppWindow>
    </Desktop>
  );
}
